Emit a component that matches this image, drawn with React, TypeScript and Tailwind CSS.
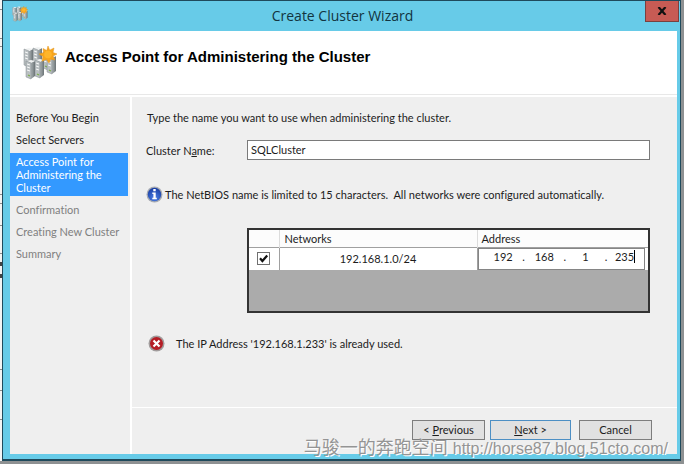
import React, { useState } from "react";

const steps = [
  { label: "Before You Begin", state: "done" },
  { label: "Select Servers", state: "done" },
  { label: "Access Point for Administering the Cluster", state: "current" },
  { label: "Confirmation", state: "pending" },
  { label: "Creating New Cluster", state: "pending" },
  { label: "Summary", state: "pending" },
];

const stepStyle: Record<string, string> = {
  done: "text-[#1c1c1c]",
  current: "bg-[#3399ff] text-white",
  pending: "text-[#808080]",
};

function ClusterIcon({ className }: { className: string }) {
  const towers = [
    [11, 1], [2, 2], [21, 5], [25, 9], [13, 13], [4, 14],
  ];
  return (
    <svg viewBox="0 0 34 34" className={className} aria-hidden="true">
      <defs>
        <linearGradient id="side" x1="0" x2="1">
          <stop offset="0" stopColor="#a9b0b2" />
          <stop offset="1" stopColor="#6b7376" />
        </linearGradient>
      </defs>
      {towers.map(([x, y], i) => (
        <g key={i}>
          <path d={`M${x + 4} ${y + 3}l4-2v15l-4 3z`} fill="url(#side)" />
          <path d={`M${x} ${y + 1}l4-1 4 1-4 2z`} fill="#f0f2f2" />
          <path d={`M${x - 1} ${y + 1}l5 2v16l-5-2z`} fill="#b9bfc1" stroke="#858d90" strokeWidth=".5" />
          <path d={`M${x} ${y + 4}l3 1M${x} ${y + 7}l3 1M${x} ${y + 10}l3 1`} stroke="#f6f7f7" />
          <path d={`M${x + 1} ${y + 15}l2 1`} stroke="#79ad45" strokeWidth="1.2" />
        </g>
      ))}
      <path
        d="M25 0l1.700 4.200L31 2l-1 4.500 4 1.500-4 2 2 4-4.200-.8L26 17l-2.500-3.500-4.500 1.700 1-4.700-4-2.500 4.600-1.200L20 2.500l3.800 2z"
        fill="#f8a51b"
        stroke="#e2941f"
        strokeWidth=".5"
      />
      <circle cx="25" cy="8.500" r="3.800" fill="#ffb52a" />
    </svg>
  );
}

function InfoIcon() {
  return (
    <svg viewBox="0 0 17 17" className="size-[17px] shrink-0" aria-hidden="true">
      <defs>
        <radialGradient id="blue" cx=".5" cy=".75" r=".7">
          <stop offset="0" stopColor="#4c80e6" />
          <stop offset="1" stopColor="#1b40a6" />
        </radialGradient>
      </defs>
      <circle cx="8.500" cy="8.500" r="8" fill="#a7abb3" />
      <circle cx="8.500" cy="8.500" r="6.700" fill="url(#blue)" />
      <path d="M7.300 3h2.400v2.200H7.300zM6.300 6.600h3.400v5.200h1.100v1.500H6.300v-1.500h1.100V8.100H6.300z" fill="#fff" />
    </svg>
  );
}

function ErrorIcon() {
  return (
    <svg viewBox="0 0 17 17" className="size-[17px] shrink-0" aria-hidden="true">
      <circle cx="8.500" cy="8.500" r="8" fill="#a19c9c" />
      <circle cx="8.500" cy="8.500" r="6.500" fill="#b51d25" />
      <path d="M5.500 5.500l6 6M11.500 5.500l-6 6" stroke="#fff" strokeWidth="2.200" />
    </svg>
  );
}

function CheckBox() {
  const [on, setOn] = useState(true);
  return (
    <label className="relative mx-auto block size-[13px]">
      <input
        type="checkbox"
        aria-label="Use network 192.168.1.0/24"
        checked={on}
        onChange={() => setOn(!on)}
        className="block size-[13px] appearance-none border border-[#707070] bg-white"
      />
      {on && (
        <svg viewBox="0 0 13 13" className="pointer-events-none absolute inset-0 size-[13px]" aria-hidden="true">
          <path d="M3 6.200l2.400 2.800L10.200 3.500" fill="none" stroke="#111" strokeWidth="2.200" />
        </svg>
      )}
    </label>
  );
}

// The sliver of another window that shows at the left edge: blank runs, each closed by a rule.
function BackgroundEdge() {
  return (
    <div className="w-0.5 shrink-0 overflow-hidden bg-[#f4f4f4]" aria-hidden="true">
      <div className="h-[10px] border-b border-[#8a8a8a]" />
      <div className="h-[29px] border-b border-[#8a8a8a]" />
      <div className="h-2 border-b border-[#8a8a8a]" />
      <div className="h-[148px] border-b border-[#8a8a8a]" />
      <div className="h-[9px] border-b border-[#8a8a8a]" />
      <div className="h-[22px] border-b border-[#8a8a8a]" />
      <div className="h-[28px] border-b border-[#8a8a8a]" />
      <div className="h-3 border-b-4 border-[#444]" />
      <div className="h-3 border-b-4 border-[#444]" />
      <div className="h-[92px] border-b border-[#8a8a8a]" />
      <div className="h-[21px] border-b border-[#8a8a8a]" />
      <div className="h-[29px] border-b border-[#8a8a8a]" />
    </div>
  );
}

const octets = ["192", "168", "1", "235"];
const buttonStyle = "h-5 border bg-[#e1e1e1] text-center leading-[16px] text-[#1c1c1c]";

export default function App() {
  return (
    <div className="relative flex min-h-screen flex-col bg-[#8e9192] pr-[3px] pb-[3px] font-[Lato,'Liberation_Sans',sans-serif] text-[11px] leading-[13px] text-[#1c1c1c] [font-variant-ligatures:none]">
      <div className="flex grow">
        <BackgroundEdge />
        <div className="flex min-w-0 grow flex-col border border-b-2 border-[#1f4a5c] bg-[#67cbe8] pr-[3px] pb-[5px] pl-[7px]">
          <header className="flex h-[30px] items-start">
            <ClusterIcon className="mt-[5px] ml-0.5 size-4" />
            <h1 className="grow pt-1 pl-3 text-center font-['Open_Sans','Noto_Sans',sans-serif] text-[14px] leading-[22px] text-[#123440]">
              Create Cluster Wizard
            </h1>
            <button
              type="button"
              aria-label="Close"
              className="-mr-0.5 flex h-[21px] w-[34px] items-center justify-center border border-t-0 border-[#79403f] bg-[#c75b54]"
            >
              <svg viewBox="0 0 10 8" className="h-2 w-2.5" aria-hidden="true">
                <path d="M1.500 0l7 8M8.500 0l-7 8" stroke="#111" strokeWidth="2.200" />
              </svg>
            </button>
          </header>

          <div className="flex h-[64px] items-start border-b border-[#e8e8e8] bg-white pl-[13px]">
            <ClusterIcon className="mt-[15px] size-[34px]" />
            <h2 className="mt-4 ml-2 font-['Liberation_Sans',Arial,sans-serif] text-[15px] leading-[20px] font-bold text-black">
              Access Point for Administering the Cluster
            </h2>
          </div>

          <div className="flex grow border-t-2 border-white bg-[#efefef]">
            <nav className="w-[122px] shrink-0 border-r-2 border-white pt-3">
              <ol className="flex flex-col gap-[5px]">
                {steps.map((s) => (
                  <li
                    key={s.label}
                    aria-current={s.state === "current" ? "step" : undefined}
                    className={`mr-0.5 py-0.5 pr-4 pl-1.5 ${stepStyle[s.state]} ${s.label.length < 30 ? "whitespace-nowrap" : ""}`}
                  >
                    {s.label}
                  </li>
                ))}
              </ol>
            </nav>

            <main className="flex min-w-0 grow flex-col">
              <div className="flex grow flex-col pr-[27px] pl-[14px]">
                <p className="mt-[14px] ml-px">Type the name you want to use when administering the cluster.</p>

                <div className="mt-4 flex items-center">
                  <label htmlFor="cluster-name" className="w-[101px] shrink-0">
                    Cluster N<u>a</u>me:
                  </label>
                  <input
                    id="cluster-name"
                    defaultValue="SQLCluster"
                    className="h-5 min-w-0 grow border border-[#7a7a7a] bg-white px-[3px] pb-0.5 outline-none"
                  />
                </div>

                <div className="mt-[26px] flex items-center gap-0.5">
                  <InfoIcon />
                  <p className="whitespace-pre">
                    The NetBIOS name is limited to 15 characters.{"  "}All networks were configured automatically.
                  </p>
                </div>

                <div className="mt-[25px] ml-[101px] h-[85px] border-2 border-[#333] bg-[#ababab]">
                  <table className="w-full table-fixed border-collapse">
                    <colgroup>
                      <col className="w-[30px]" />
                      <col className="w-[198px]" />
                      <col />
                    </colgroup>
                    <thead>
                      <tr className="h-[17px] border-b border-[#a0a0a0] bg-[#fcfcfc] text-left">
                        <td className="border-r border-[#dcdcdc]" />
                        <th className="border-r border-[#dcdcdc] p-0 pl-[5px] font-normal">Networks</th>
                        <th className="p-0 pl-1 font-normal">Address</th>
                      </tr>
                    </thead>
                    <tbody>
                      <tr className="h-[22px] bg-white">
                        <td className="border-r border-[#a0a0a0] p-0">
                          <CheckBox />
                        </td>
                        <td className="border-r border-[#a0a0a0] p-0 text-center">192.168.1.0/24</td>
                        <td className="p-0 pr-[3px]">
                          <div className="flex h-[22px] items-center border border-[#858585] pr-[9px] pb-1 pl-2">
                            {octets.map((o, i) => (
                              <React.Fragment key={i}>
                                {i > 0 && <span className="w-2 text-center">.</span>}
                                <input
                                  aria-label={`Address octet ${i + 1}`}
                                  defaultValue={o}
                                  className={`w-6 min-w-0 bg-transparent outline-none ${i === 3 ? "text-right" : "grow text-center"}`}
                                />
                              </React.Fragment>
                            ))}
                            <span className="h-[13px] w-px bg-black" />
                          </div>
                        </td>
                      </tr>
                    </tbody>
                  </table>
                </div>

                <div className="mt-[22px] ml-0.5 flex items-center gap-[11px]" role="alert">
                  <ErrorIcon />
                  <p>The IP Address '192.168.1.233' is already used.</p>
                </div>
              </div>

              <footer className="flex h-[47px] justify-end border-t border-white pt-3 pr-[25px]">
                <button type="button" className={`${buttonStyle} mr-[5px] w-[73px] border-[#7d7d7d]`}>
                  &lt; <u>P</u>revious
                </button>
                <button type="button" className={`${buttonStyle} mr-2 w-[81px] border-[#4d8fc4]`}>
                  <u>N</u>ext &gt;
                </button>
                <button type="button" className={`${buttonStyle} w-[73px] border-[#7d7d7d]`}>
                  Cancel
                </button>
              </footer>
            </main>
          </div>
        </div>
      </div>
      <p className="pointer-events-none absolute right-4 bottom-1 font-['Liberation_Sans','Noto_Sans_CJK_SC',sans-serif] text-[18px] leading-[22px] whitespace-nowrap text-[#949494] [text-shadow:1px_1px_0_#fff]">
        马骏一的奔跑空间 <span className="text-[16px]">http://horse87.blog.51cto.com/</span>
      </p>
    </div>
  );
}
